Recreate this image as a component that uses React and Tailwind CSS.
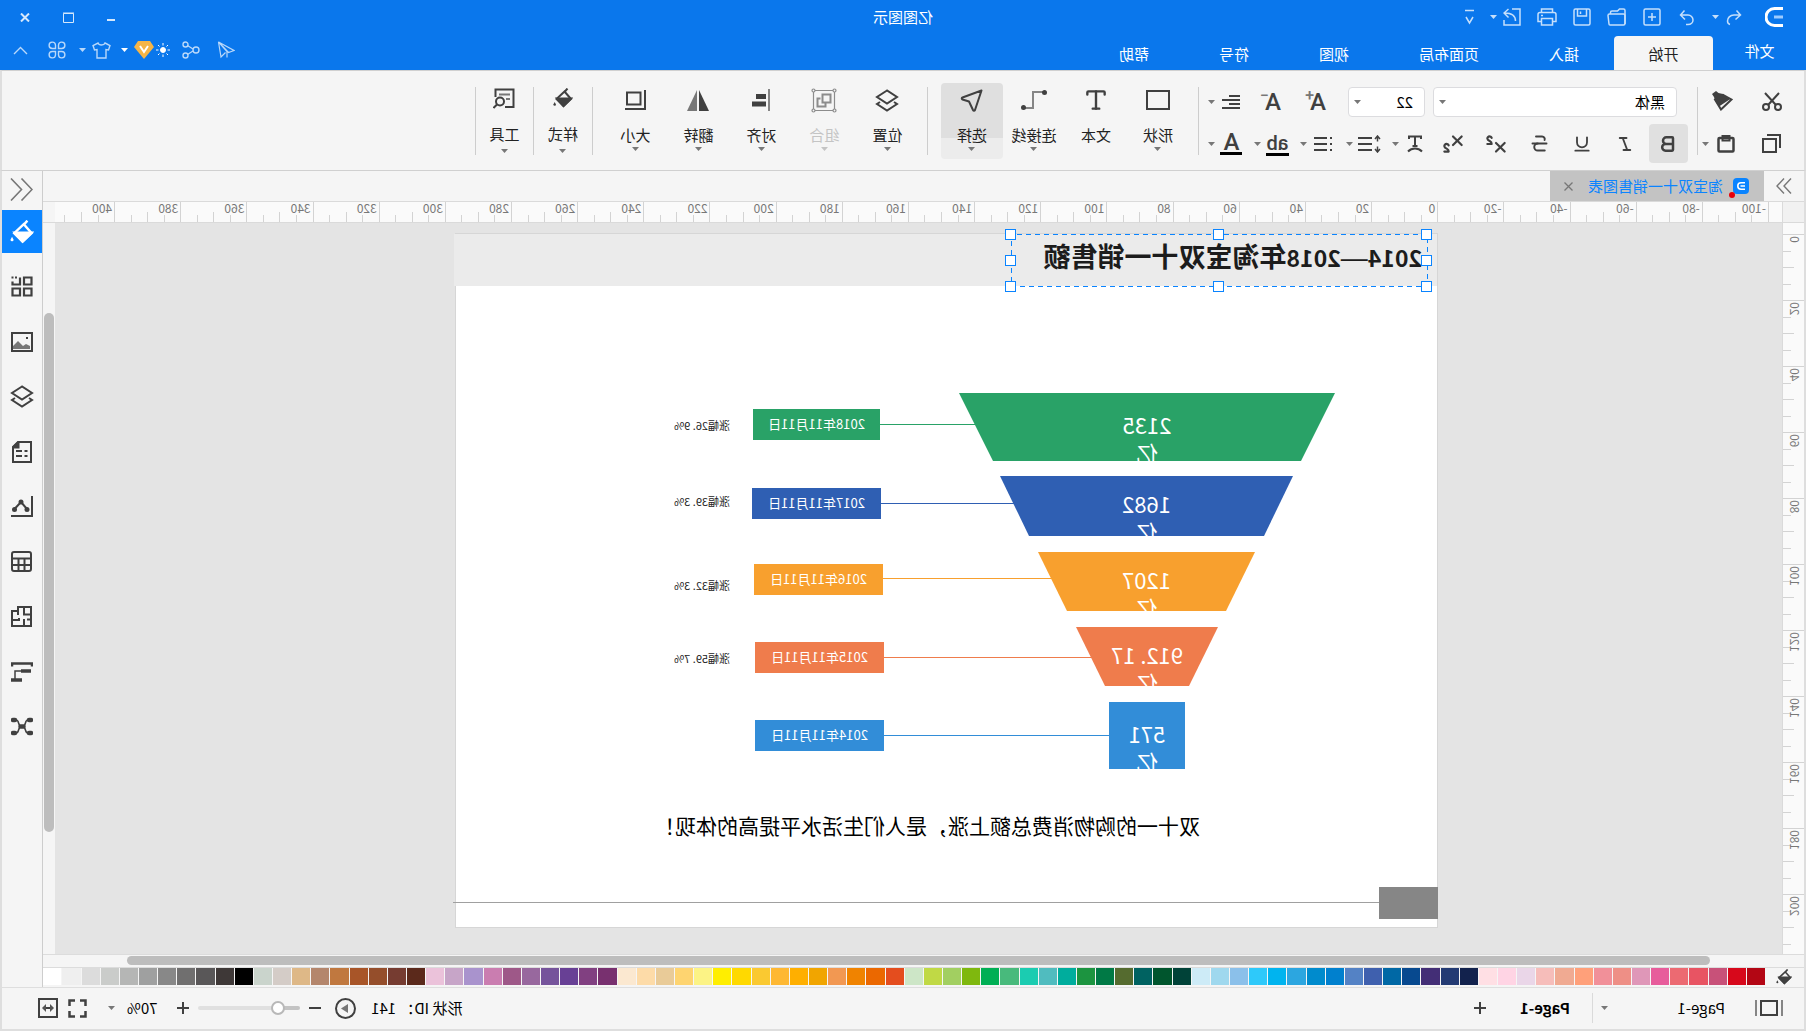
import React, { useState } from 'react';
import { Bold, Italic, Strikethrough, Subscript, Superscript, Type, Underline } from 'lucide-react';

const Svg = ({ w = 20, h = w, sw = 2, children }) => (
    <svg
        width={w}
        height={h}
        viewBox={`0 0 ${w} ${h}`}
        fill="none"
        stroke="currentColor"
        strokeWidth={sw}
        className="shrink-0"
        aria-hidden="true"
    >
        {children}
    </svg>
);

const Caret = () => (
    <svg width="7" height="4" viewBox="0 0 7 4" className="shrink-0" aria-hidden="true">
        <path d="M0 0h7L3.5 4z" fill="currentColor" />
    </svg>
);

/* ---------- quick access icons ---------- */

const LogoIcon = () => (
    <Svg w={19} h={20} sw={3}>
        <path d="M1 1.500h8.500a8.500 8.500 0 0 1 0 17H1" />
        <path d="M1 10h9" stroke="#9ccbff" />
    </Svg>
);
const UndoIcon = () => (
    <Svg w={16} h={17} sw={1.5}>
        <path d="M5.500 1.500 1.500 6l5 4.500M2 6h6c4 0 6.500 3 6.500 6 0 2-1 3-2.500 3.500" />
    </Svg>
);
const RedoIcon = () => (
    <Svg w={16} h={17} sw={1.5}>
        <path d="M10.500 1.500 14.500 6l-4.500 4.500M14 6H7a5 5 0 0 0-5 5c0 2.500 2 4.500 5 4.500h2" />
    </Svg>
);
const NewIcon = () => (
    <Svg w={18} sw={1.5}>
        <rect x="1" y="1" width="16" height="16" rx="1.500" />
        <path d="M9 5v8M5 9h8" />
    </Svg>
);
const OpenIcon = () => (
    <Svg w={19} h={18} sw={1.5}>
        <path d="M1 16V2.500C1 1.500 1.500 1 2.500 1h4l2 2h5.500c1 0 1.500.500 1.500 1.500V6" />
        <path d="M1 15.500V7.500C1 6.500 1.500 6 2.500 6h14c1 0 1.500.500 1.500 1.500L17 16c0 .700-.500 1-1 1H2.500C1.500 17 1 16.500 1 15.500z" />
    </Svg>
);
const SaveIcon = () => (
    <Svg w={18} sw={1.5}>
        <rect x="1" y="1" width="16" height="16" rx="1.500" />
        <path d="M4.500 1v7h9V1M10.500 3.500v2.500" />
    </Svg>
);
const PrintIcon = () => (
    <Svg w={20} h={18} sw={1.5}>
        <path d="M4.500 4.500V1h11v3.500M4.500 13.500H1V6.500c0-1 .500-2 2-2h14c1.500 0 2 1 2 2v7h-3.500" />
        <path d="M4.500 10.500h11V17h-11zM14 7.500h2" />
    </Svg>
);
const ExportIcon = () => (
    <Svg w={18} sw={1.5}>
        <path d="M9 1H1v16h16v-5M5.500 13c0-5 3.500-8 11-8M12.500 1l4.500 4-4.500 4.500" />
    </Svg>
);
const MoreIcon = () => (
    <Svg w={9} h={16} sw={1.5}>
        <path d="M0 1.500h9M1 8l3.500 6L8 8" />
    </Svg>
);

/* ---------- header right icons ---------- */

const SendIcon = () => (
    <Svg w={18} sw={1.2}>
        <path d="M16.500 1 1 9.500l5.500 2L16.500 1zM16.500 1 14 16l-4.500-4.500M8 16.500v-6L16 1.500" />
    </Svg>
);
const ShareIcon = () => (
    <Svg w={18} sw={1.4}>
        <circle cx="4" cy="9" r="3" />
        <circle cx="14.500" cy="3.500" r="2.500" />
        <circle cx="14.500" cy="14.500" r="2.500" />
        <path d="M7 8l5.500-3.500M7 10l5.500 3.500" />
    </Svg>
);
const SunIcon = () => (
    <Svg w={14} sw={1}>
        <circle cx="7" cy="7" r="2.500" fill="currentColor" />
        <path d="M7 0v2.500M7 11.500V14M0 7h2.500M11.500 7H14M2 2l1.500 1.500M10.500 10.500 12 12M12 2l-1.500 1.500M3.500 10.500 2 12" />
    </Svg>
);
const VipIcon = () => (
    <svg width="20" height="18" viewBox="0 0 20 18" aria-hidden="true">
        <path d="M4 0h12l4 6-10 12L0 6z" fill="#f5b547" />
        <path d="M6 5l4 6 4-6" fill="none" stroke="#fff" strokeWidth="2" />
    </svg>
);
const ShirtIcon = () => (
    <Svg w={19} h={17} sw={1.4}>
        <path d="M6 1 1 3.500 2.500 8l2.500-.500V16h9V7.500l2.500.500L18 3.500 13 1c-.500 1.500-2 2-3.500 2S6.500 2.500 6 1z" />
    </Svg>
);
const CloverIcon = () => (
    <Svg w={18} sw={1.4}>
        <path d="M7.500 7.500V4a3.200 3.200 0 1 0-3.200 3.500zM10.500 7.500V4a3.200 3.200 0 1 1 3.200 3.500zM7.500 10.500V14a3.200 3.200 0 1 1-3.200-3.500zM10.500 10.500V14a3.200 3.200 0 1 0 3.200-3.500z" />
    </Svg>
);

/* ---------- ribbon icons ---------- */

const CutIcon = () => (
    <Svg w={20} h={19}>
        <circle cx="4" cy="15" r="3" />
        <circle cx="16" cy="15" r="3" />
        <path d="M3 1l10.500 11.500M17 1 6.500 12.500" />
    </Svg>
);
const BrushIcon = () => (
    <Svg w={21} h={20}>
        <path d="M1.500 8.500 12 18.500l6-10L10 4z" />
        <path d="M3.500 8.500 10 3l4.500-1L17 0l4 3-2 3-1 3.500-4 6z" fill="currentColor" stroke="none" />
    </Svg>
);
const CopyIcon = () => (
    <Svg w={19}>
        <path d="M5 5h13v13H5zM1 14V1h13" />
    </Svg>
);
const PasteIcon = () => (
    <Svg w={18} h={19} sw={2.5}>
        <rect x="1.500" y="4" width="15" height="13.500" rx="1" />
        <path d="M5.500 2h7v4.500h-7z" strokeWidth="2" />
    </Svg>
);
const AlignTextIcon = () => (
    <Svg w={18} h={14}>
        <path d="M0 1h11M0 5h18M0 9h11M0 13h18" />
    </Svg>
);
const CurveTextIcon = () => (
    <Svg w={16} h={18}>
        <path d="M2 4V1.500h12V4M8 2v9M5.500 11h5M1 16.500c4-4 10-4 14 0" />
    </Svg>
);
const LineHeightIcon = () => (
    <Svg w={23} h={18}>
        <path d="M9 3h14M9 9h14M9 15h14" />
        <path d="M3.500 1.500v5M1 4l2.500-3L6 4M3.500 11.500v5M1 14l2.500 3L6 14" strokeWidth="1.500" />
    </Svg>
);
const ListIcon = () => (
    <Svg w={18} h={16}>
        <path d="M0 2h2M0 8h2M0 14h2M5 2h13M5 8h13M5 14h13" />
    </Svg>
);
const ShapeIcon = () => (
    <Svg w={24} h={20}>
        <path d="M1 1h22v18H1z" />
    </Svg>
);
const ConnectorIcon = () => (
    <Svg w={26} h={20}>
        <path d="M3 2h11v16h9" stroke="#858585" />
        <circle cx="2.500" cy="2.500" r="2.500" fill="currentColor" stroke="none" />
        <circle cx="23.500" cy="17.500" r="2.500" fill="currentColor" stroke="none" />
    </Svg>
);
const SelectIcon = () => (
    <Svg w={24}>
        <path d="M2.500 2.500 21.500 9.500c1 .500 1 1.500 0 2L15 13.500 11 22c-.500 1-1.500 1-2 0z" strokeLinejoin="round" />
    </Svg>
);
const LayersIcon = () => (
    <Svg w={24} h={23}>
        <path d="M12 1.500 22 8l-10 6.500L2 8z" />
        <path d="M5 13l-3 2 10 6.500L22 15l-3-2" />
    </Svg>
);
const GroupIcon = () => (
    <Svg w={26} h={25} sw={1.2}>
        <path d="M2.500 2.500h21v20h-21z" />
        <path d="M6.500 6.500h8v8h-8zM16.500 10.500h3v8h-8v-3" strokeWidth="2" />
        <g fill="#f5f5f5">
            <circle cx="2.500" cy="2.500" r="1.500" />
            <circle cx="23.500" cy="2.500" r="1.500" />
            <circle cx="2.500" cy="22.500" r="1.500" />
            <circle cx="23.500" cy="22.500" r="1.500" />
        </g>
    </Svg>
);
const AlignIcon = () => (
    <Svg w={18} h={22}>
        <path d="M1 0v22" stroke="#858585" />
        <path d="M4 7.500h10M4 15h14" strokeWidth="5" />
    </Svg>
);
const FlipIcon = () => (
    <svg width="22" height="21" viewBox="0 0 22 21" aria-hidden="true">
        <path d="M10 0v21H0z" fill="#404040" />
        <path d="M12 0v21h10z" fill="#777" />
    </svg>
);
const SizeIcon = () => (
    <Svg w={21} h={20}>
        <path d="M5.500 2.500H19v12H5.500zM1 0v19h20" />
    </Svg>
);
const BucketIcon = ({ size = 20 }) => (
    <svg
        width={size}
        height={size}
        viewBox="0 0 20 20"
        fill="none"
        stroke="currentColor"
        strokeWidth="2"
        aria-hidden="true"
    >
        <path d="M5.500 .500l3.500 4M8.500 3.500l8 7.500-7 7-7.500-7z" />
        <path d="M2 10.500h14L9.500 18z" fill="currentColor" />
        <path d="M18.300 14l1.300 2.500a1.300 1.300 0 1 1-2.600 0z" fill="currentColor" stroke="none" />
    </svg>
);
const ToolsIcon = () => (
    <Svg w={22} h={21}>
        <path d="M10 19H1.500V1.500h18V9" />
        <path d="M5 6.500h11M5 11h4" stroke="#777" />
        <circle cx="15" cy="13.500" r="4" />
        <path d="M18 16.500 21.500 20" />
    </Svg>
);

/* ---------- side bar icons ---------- */

const SideBucketIcon = () => <BucketIcon size={24} />;
const AppsIcon = () => (
    <Svg w={22} h={21} sw={2.2}>
        <path d="M1.500 1.500h7.500v7H1.500zM1.500 12.500h7.500v7H1.500zM13 12.500h7.500v7H13zM13 1.500v7h7.500v-3" />
        <path d="M16 1.500h2M19.500 1.500h2" />
    </Svg>
);
const PictureIcon = () => (
    <Svg w={22} h={20}>
        <path d="M1 1h20v18H1z" />
        <path d="M3 17v-3l4-2 3 2 5-5 5 5v3z" fill="#777" stroke="none" />
        <path d="M5 6h2" />
    </Svg>
);
const NoteIcon = () => (
    <Svg w={20} h={22}>
        <path d="M1 1h13l5 5v15H1zM4.500 10h3M10 10h6M4.500 15h3M10 15h6" />
        <path d="M13.500 1v5.500H19z" fill="currentColor" />
    </Svg>
);
const ChartIcon = () => (
    <Svg w={22} h={21}>
        <path d="M1 0v20h21" />
        <path d="M6 13l6-7 6.500 7" />
        <g fill="currentColor" stroke="none">
            <circle cx="6" cy="13.500" r="2.500" />
            <circle cx="12" cy="6" r="2.500" />
            <circle cx="18.500" cy="13.500" r="2.500" />
        </g>
    </Svg>
);
const TableIcon = () => (
    <Svg w={21}>
        <rect x="1" y="1" width="19" height="19" rx="2" />
        <path d="M1 7.500h19M1 14h19M7.500 8v12M13.500 8v12" />
    </Svg>
);
const PlanIcon = () => (
    <Svg w={21}>
        <path d="M1 1h13v4h6v15H1zM1 8.500h8M8 1v8M14 5v4M8 20v-7M1 13.500h4M13 14h7M13 12v3" />
    </Svg>
);
const GanttIcon = () => (
    <Svg w={22} h={20}>
        <path d="M0 1.500h22M1 1v3.500M21 1v3.500" strokeWidth="2.500" />
        <path d="M2 9h10M11 18h11" strokeWidth="3.500" />
        <path d="M12 9h6v8" strokeWidth="1.500" />
    </Svg>
);
const MindIcon = () => (
    <Svg w={22} h={19}>
        <path d="M2 3h2M2 16h2M18 3h2M18 16h2M9.500 9.500h3" strokeWidth="4.500" strokeLinecap="round" />
        <path d="M5 3c4 0 1 6.500 6 6.500S13 3 17 3M5 16c4 0 1-6.500 6-6.500s2 6.500 6 6.500" strokeWidth="1.500" />
    </Svg>
);

/* ---------- data ---------- */

const MENU = [
    { name: '开始', width: 'w-[99px]' },
    { name: '插入', width: 'w-[100px]' },
    { name: '页面布局', width: 'w-[130px]' },
    { name: '视图', width: 'w-[100px]' },
    { name: '符号', width: 'w-[100px]' },
    { name: '帮助', width: 'w-[100px]' },
];

const SIDE_TOOLS = [
    ['填充', SideBucketIcon],
    ['符号库', AppsIcon],
    ['图片', PictureIcon],
    ['图层', LayersIcon],
    ['注释', NoteIcon],
    ['图表', ChartIcon],
    ['表格', TableIcon],
    ['平面图', PlanIcon],
    ['甘特图', GanttIcon],
    ['思维导图', MindIcon],
];

const RULER_X = Array.from({ length: 26 }, (_, i) => i * 20 - 100);
const RULER_Y = Array.from({ length: 11 }, (_, i) => i * 20);

const PALETTE = [
    '#b30614', '#d7081b', '#c85179', '#e85463', '#ec6a72', '#e75c9b', '#df97b8', '#ee8f86', '#f19099', '#ffa07a',
    '#f0aa92', '#f6bdba', '#ead6e8', '#ffd4e4', '#ffdfe4', '#12224d', '#233a73', '#432e76', '#07498f', '#0068a5',
    '#3f60ae', '#5482c5', '#0080ce', '#008bcd', '#2ca6e0', '#00b4ef', '#2ec9fa', '#8bc0ea', '#9fd8ee', '#cdebf7',
    '#004238', '#00552d', '#006261', '#556b2f', '#007945', '#1c9440', '#00ad9d', '#50bcbf', '#1bccb1', '#48ba7c',
    '#00af54', '#7fb80e', '#a2cf61', '#c0d945', '#cde6c7', '#e44d1e', '#eb6800', '#f08300', '#f29852', '#f1a500',
    '#ffaf00', '#feb833', '#fac931', '#ffd900', '#ffee00', '#fcf385', '#fed470', '#e9cb98', '#fddba8', '#fbe8d0',
    '#78306f', '#814081', '#684095', '#75539b', '#98689e', '#9e5888', '#ca7db0', '#a993cd', '#c7a5c8', '#ebc2da',
    '#5b291b', '#763c31', '#954e2b', '#a85528', '#c0783f', '#b4866c', '#deb887', '#d4ccc7', '#cad4cc', '#000000',
    '#3e3837', '#595758', '#706f6f', '#888888', '#9fa0a0', '#b5b6b5', '#caccca', '#dcdcdc', '#efefef', '#ffffff',
];

const SLANT = '[clip-path:polygon(0_0,100%_0,calc(100%-29px)_100%,29px_100%)]';

const FUNNEL = [
    {
        value: '2135',
        date: '2018年11月11日',
        growth: '涨幅26. 9%',
        color: 'bg-[#29a267]',
        shape: 'left-[102px] top-[159px] w-[376px] h-[68px] [clip-path:polygon(0_0,100%_0,calc(100%-34px)_100%,34px_100%)]',
        line: 'top-[190px]',
        box: 'left-[557px] top-[175px] w-[127px]',
        note: 'top-[183px]',
    },
    {
        value: '1682',
        date: '2017年11月11日',
        growth: '涨幅39. 3%',
        color: 'bg-[#2f5fb3]',
        shape: `left-[144px] top-[242px] w-[293px] h-[60px] ${SLANT}`,
        line: 'top-[269px]',
        box: 'left-[556px] top-[254px] w-[129px]',
        note: 'top-[259px]',
    },
    {
        value: '1207',
        date: '2016年11月11日',
        growth: '涨幅32. 3%',
        color: 'bg-[#f8a02e]',
        shape: `left-[182px] top-[318px] w-[217px] h-[59px] ${SLANT}`,
        line: 'top-[344px]',
        box: 'left-[554px] top-[330px] w-[129px]',
        note: 'top-[343px]',
    },
    {
        value: '912. 17',
        date: '2015年11月11日',
        growth: '涨幅59. 7%',
        color: 'bg-[#ef7c4c]',
        shape: `left-[219px] top-[393px] w-[142px] h-[59px] ${SLANT}`,
        line: 'top-[423px]',
        box: 'left-[553px] top-[408px] w-[129px]',
        note: 'top-[416px]',
    },
    {
        value: '571',
        date: '2014年11月11日',
        color: 'bg-[#328dd8]',
        shape: 'left-[252px] top-[468px] w-[76px] h-[67px]',
        line: 'top-[501px]',
        box: 'left-[553px] top-[486px] w-[129px]',
    },
];

const HANDLES = [
    'left-0 top-0',
    'left-1/2 top-0',
    'left-full top-0',
    'left-0 top-1/2',
    'left-full top-1/2',
    'left-0 top-full',
    'left-1/2 top-full',
    'left-full top-full',
];

/* ---------- header ---------- */

const QuickButton = ({ label, children }) => (
    <button aria-label={label} className="flex h-[34px] w-[30px] items-center justify-center">
        {children}
    </button>
);

const Header = () => {
    const [active, setActive] = useState('开始');

    return (
        <header className="flex h-[70px] shrink-0 flex-col bg-[#0a77ec] text-[15px] leading-5 text-white">
            <div className="grid h-[34px] grid-cols-[1fr_auto_1fr] items-center">
                <div className="flex items-center gap-[5px] pl-4 text-[#c5dffb]">
                    <span className="mr-1.5 flex w-[30px] justify-center text-white">
                        <LogoIcon />
                    </span>
                    <span className="mr-[5px] flex items-center">
                        <QuickButton label="撤销"><UndoIcon /></QuickButton>
                        <Caret />
                    </span>
                    <QuickButton label="重做"><RedoIcon /></QuickButton>
                    <QuickButton label="新建"><NewIcon /></QuickButton>
                    <QuickButton label="打开"><OpenIcon /></QuickButton>
                    <QuickButton label="保存"><SaveIcon /></QuickButton>
                    <QuickButton label="打印"><PrintIcon /></QuickButton>
                    <span className="flex items-center">
                        <QuickButton label="导出"><ExportIcon /></QuickButton>
                        <Caret />
                    </span>
                    <QuickButton label="更多"><MoreIcon /></QuickButton>
                </div>
                <h1>亿图图示</h1>
                <div className="mr-1 flex justify-end text-[#d5e8fc]">
                    <button aria-label="最小化" className="flex h-8 w-[43px] items-center justify-center">
                        <Svg w={8} h={10} sw={2}><path d="M0 8h8" /></Svg>
                    </button>
                    <button aria-label="最大化" className="flex h-8 w-[43px] items-center justify-center">
                        <Svg w={11} sw={1}><path d="M.500 1.500h10v9H.500zM0 1h11" /></Svg>
                    </button>
                    <button aria-label="关闭" className="flex h-8 w-[43px] items-center justify-center">
                        <Svg w={10} h={9}><path d="M1 .500l8 8M9 .500l-8 8" /></Svg>
                    </button>
                </div>
            </div>
            <div className="flex h-9 items-end">
                <button className="h-[34px] w-[93px] pb-1">文件</button>
                <nav className="flex">
                    {MENU.map((item) => (
                        <button
                            key={item.name}
                            onClick={() => setActive(item.name)}
                            className={`h-[34px] rounded-t-sm pt-px ${item.width} ${active === item.name
                                ? 'bg-[#f5f5f5] text-[#222]'
                                : ''
                                }`}
                        >
                            {item.name}
                        </button>
                    ))}
                </nav>
                <div className="mr-[3px] ml-auto flex h-8 items-center self-start text-[#b9d8fa]">
                    <button aria-label="发送" className="flex w-[35px] justify-center"><SendIcon /></button>
                    <button aria-label="分享" className="flex w-[35px] justify-center"><ShareIcon /></button>
                    <button aria-label="会员" className="ml-1 flex items-center gap-[2px] text-white">
                        <SunIcon />
                        <VipIcon />
                        <span className="mr-1 ml-1"><Caret /></span>
                    </button>
                    <button aria-label="主题" className="flex w-[42px] items-center gap-1.5 pl-1.5">
                        <ShirtIcon />
                        <Caret />
                    </button>
                    <button aria-label="应用" className="flex w-[36px] justify-center"><CloverIcon /></button>
                    <button aria-label="收起" className="flex w-[36px] justify-center">
                        <Svg w={15} h={9} sw={1.4}><path d="M1 8l6.500-6.500L14 8" /></Svg>
                    </button>
                </div>
            </div>
        </header>
    );
};

/* ---------- ribbon ---------- */

const Divider = () => <span className="h-[68px] w-px shrink-0 bg-[#cdcdcd]" />;

const IconButton = ({ label, className = 'w-[43px]', children }) => (
    <button aria-label={label} className={`flex h-full items-center justify-center ${className}`}>
        {children}
    </button>
);

const DropButton = ({ label, children }) => (
    <button aria-label={label} className="flex h-full w-[46px] items-center">
        <span className="flex w-[33px] justify-center">{children}</span>
        <span className="text-[#777]"><Caret /></span>
    </button>
);

const BigButton = ({ label, icon: Icon, width, caret = true, tall, active, disabled }) => (
    <button
        disabled={disabled}
        className={`-mt-1 flex h-[76px] flex-col items-center rounded-sm ${width} ${tall ? 'pt-[3px]' : 'pt-[5px]'} ${active
            ? 'bg-[linear-gradient(#dfdfdf_55px,#ececec_55px)]'
            : ''
            } ${disabled ? 'text-[#c4c4c4]' : 'text-[#404040]'}`}
    >
        <span className={`flex h-6 items-center ${disabled ? 'text-[#8c8c8c]' : ''}`}><Icon /></span>
        <span className={`text-[15px] leading-5 ${tall ? 'mt-[14px]' : 'mt-[13px]'} ${disabled ? '' : 'text-[#222]'}`}>
            {label}
        </span>
        {caret && (
            <span className={`${tall ? 'mt-[5px]' : 'mt-[2px]'} ${disabled ? '' : 'text-[#777]'}`}><Caret /></span>
        )}
    </button>
);

const TypeIcon = () => <Type size={26} strokeWidth={2.2} />;

const Ribbon = () => (
    <section className="flex h-[101px] shrink-0 items-start border-x-2 border-y border-x-[#dedede] border-y-[#d0d0d0] bg-[#f5f5f5] pt-4 text-[#404040]">
        <div className="flex w-[106px] flex-col pl-[7px]">
            <div className="flex h-7">
                <IconButton label="剪切" className="w-[50px]"><CutIcon /></IconButton>
                <IconButton label="格式刷" className="w-[49px]"><BrushIcon /></IconButton>
            </div>
            <div className="mt-[9px] flex h-[39px]">
                <IconButton label="复制" className="w-[50px]"><CopyIcon /></IconButton>
                <button aria-label="粘贴" className="flex items-center gap-2 pl-3">
                    <PasteIcon />
                    <span className="text-[#777]"><Caret /></span>
                </button>
            </div>
        </div>
        <Divider />
        <div className="flex w-[498px] flex-col">
            <div className="flex h-[30px] pl-5">
                <label className="relative flex w-[244px] items-center text-[#777]">
                    <select
                        aria-label="字体"
                        className="h-full w-full appearance-none rounded-sm border border-[#dcdcdf] bg-white pl-[11px] text-[15px] leading-5 text-black"
                    >
                        <option>黑体</option>
                    </select>
                    <span className="pointer-events-none absolute right-1.5"><Caret /></span>
                </label>
                <label className="relative ml-2 flex w-[77px] items-center text-[#777]">
                    <select
                        aria-label="字号"
                        className="h-full w-full appearance-none rounded-sm border border-[#dcdcdf] bg-white pl-[11px] text-[15px] leading-5 text-black"
                    >
                        <option>22</option>
                    </select>
                    <span className="pointer-events-none absolute right-1.5"><Caret /></span>
                </label>
                <button className="ml-[10px] flex w-[45px] items-center justify-center font-['Roboto'] text-[24px] leading-[30px] font-medium">
                    A<span className="-mt-3 -ml-1 text-[16px] leading-4 text-[#777]">+</span>
                </button>
                <button className="flex w-[45px] items-center justify-center font-['Roboto'] text-[24px] leading-[30px] font-medium">
                    A<span className="-mt-3 -ml-1 text-[16px] leading-4 text-[#777]">−</span>
                </button>
                <DropButton label="对齐文字"><AlignTextIcon /></DropButton>
            </div>
            <div className="mt-[7px] flex h-[39px] pl-[9px]">
                <IconButton label="粗体" className="mr-[2px] w-[39px] rounded-sm bg-[#e0e0e0]">
                    <Bold size={20} strokeWidth={3} />
                </IconButton>
                <IconButton label="斜体"><Italic size={18} strokeWidth={2.5} /></IconButton>
                <IconButton label="下划线"><Underline size={20} strokeWidth={2.2} /></IconButton>
                <IconButton label="删除线"><Strikethrough size={21} strokeWidth={2.2} /></IconButton>
                <IconButton label="上标"><Superscript size={26} strokeWidth={2} /></IconButton>
                <IconButton label="下标"><Subscript size={26} strokeWidth={2} /></IconButton>
                <DropButton label="文字变形"><CurveTextIcon /></DropButton>
                <DropButton label="行距"><LineHeightIcon /></DropButton>
                <DropButton label="项目符号"><ListIcon /></DropButton>
                <DropButton label="突出显示">
                    <span className="mt-0.5 border-b-[3px] border-black font-['Roboto'] text-[20px] leading-5 font-medium">ab</span>
                </DropButton>
                <DropButton label="字体颜色">
                    <span className="w-[22px] border-b-[3px] border-black font-['Roboto'] text-[24px] leading-5 font-medium">A</span>
                </DropButton>
            </div>
        </div>
        <Divider />
        <div className="mr-[13px] ml-[9px] flex">
            <BigButton label="形状" icon={ShapeIcon} width="w-[62px]" />
            <BigButton label="文本" icon={TypeIcon} width="w-[62px]" caret={false} />
            <BigButton label="连接线" icon={ConnectorIcon} width="w-[62px]" />
            <BigButton label="选择" icon={SelectIcon} width="w-[62px]" active />
        </div>
        <Divider />
        <div className="mr-[11px] ml-2 flex">
            <BigButton label="位置" icon={LayersIcon} width="w-[63px]" />
            <BigButton label="组合" icon={GroupIcon} width="w-[63px]" disabled />
            <BigButton label="对齐" icon={AlignIcon} width="w-[63px]" />
            <BigButton label="翻转" icon={FlipIcon} width="w-[63px]" />
            <BigButton label="大小" icon={SizeIcon} width="w-[63px]" />
        </div>
        <Divider />
        <BigButton label="样式" icon={BucketIcon} width="w-[58px]" tall />
        <Divider />
        <BigButton label="工具" icon={ToolsIcon} width="w-[57px]" tall />
        <Divider />
    </section>
);

/* ---------- work area ---------- */

const DocTabs = () => (
    <div className="flex h-[30px] shrink-0 items-stretch text-[15px] leading-5">
        <button aria-label="展开符号库" className="flex w-10 items-center justify-center text-[#777]">
            <Svg w={16} sw={1.4}><path d="M1 .500 8 8l-7 7.500M8 .500 15 8l-7 7.500" /></Svg>
        </button>
        <div className="flex w-[214px] items-center bg-[#c3c3c3] pl-[15px] text-[#0a84ff]">
            <span className="relative flex size-4 items-center justify-center rounded-sm bg-[#0a84ff] text-white">
                <Svg w={8} h={8} sw={1.6}><path d="M0 .800h4a3.200 3.200 0 0 1 0 6.400H0M0 4h4.500" /></Svg>
                <span className="absolute -right-1 -bottom-1 size-1.5 rounded-full bg-red-600" />
            </span>
            <span className="ml-[10px]">淘宝双十一销售图表</span>
            <button aria-label="关闭文档" className="ml-[15px] text-[#777]">
                <Svg w={9} sw={1.3}><path d="M.500.500l8 8M8.500.500l-8 8" /></Svg>
            </button>
        </div>
    </div>
);

const TopRuler = () => (
    <div className="flex h-[22px] shrink-0 border-y border-[#dadada] text-xs leading-3 text-[#777]">
        <div className="w-[22px] shrink-0 border-r border-[#dadada] bg-[#f1f1f1]" />
        <div className="min-w-0 flex-1 overflow-x-clip bg-[#fafafa] pl-[13px]">
            <div className="flex h-full w-[1720px]">
                {RULER_X.map((n) => (
                    <div key={n} className="relative flex flex-1 items-end border-l border-[#d3d3d3]">
                        <span className="absolute top-0 left-0.5">{n}</span>
                        <i className="h-[7px] flex-1 border-r border-[#d3d3d3]" />
                        <i className="h-[10px] flex-1 border-r border-[#d3d3d3]" />
                        <i className="h-[7px] flex-1 border-r border-[#d3d3d3]" />
                        <i className="flex-1" />
                    </div>
                ))}
            </div>
        </div>
        <div className="w-3 shrink-0 bg-[#f5f5f5]" />
    </div>
);

const SideRuler = () => (
    <div className="w-[22px] shrink-0 overflow-y-clip border-r border-[#dadada] bg-[#fafafa] pt-[11px] text-xs leading-[14px] text-[#777]">
        {RULER_Y.map((n) => (
            <div key={n} className="relative flex h-[66px] flex-col items-end border-t border-[#d3d3d3]">
                <span className="absolute top-px left-0.5 rotate-180 [writing-mode:vertical-rl]">{n}</span>
                <i className="w-2 flex-1 border-b border-[#d3d3d3]" />
                <i className="w-[11px] flex-1 border-b border-[#d3d3d3]" />
                <i className="w-2 flex-1 border-b border-[#d3d3d3]" />
                <i className="flex-1" />
            </div>
        ))}
    </div>
);

const Page = () => (
    <div className="relative h-[695px] w-[983px] border border-[#d6d6d6] bg-white">
        <div className="-mr-0.5 h-[52px] bg-[#ebebeb]" />
        <div className="absolute top-0 left-[10px] flex h-[52px] w-[416px] items-center pb-1.5 pl-[5px] text-[27px] leading-8 font-bold whitespace-nowrap text-[#1c1c1c]">
            <h2>
                <span className="text-[23px]">2014</span>
                <span className="font-['Liberation_Sans'] font-normal">—</span>
                <span className="text-[23px]">2018</span>
                年淘宝双十一销售额
            </h2>
            <svg
                className="absolute inset-0 size-full overflow-visible"
                shapeRendering="crispEdges"
                aria-hidden="true"
            >
                <rect width="100%" height="100%" fill="none" stroke="#0a84ff" strokeDasharray="5 4" />
            </svg>
            {HANDLES.map((pos) => (
                <i
                    key={pos}
                    className={`absolute -mt-[5px] -ml-[5px] size-[11px] border border-[#0a84ff] bg-white ${pos}`}
                />
            ))}
        </div>

        {FUNNEL.map((row) => (
            <React.Fragment key={row.date}>
                <i className={`absolute left-[327px] h-px w-[230px] ${row.color} ${row.line}`} />
                <div
                    className={`absolute flex items-center justify-center overflow-hidden ${row.color} ${row.shape}`}
                >
                    <p className="h-[34px] text-center text-[22px] leading-7 text-white">
                        {row.value}
                        <br />
                        亿
                    </p>
                </div>
                <div
                    className={`absolute flex h-[31px] items-center justify-center pb-0.5 text-[13px] leading-5 text-white ${row.color} ${row.box}`}
                >
                    {row.date}
                </div>
                {row.growth && (
                    <p className={`absolute left-[707px] text-[11px] leading-4 whitespace-nowrap text-[#222] ${row.note}`}>
                        {row.growth}
                    </p>
                )}
            </React.Fragment>
        ))}

        <p className="absolute top-[577px] left-[237px] text-[21px] leading-7 whitespace-nowrap text-black">
            双十一的购物消费总额上涨，是人们生活水平提高的体现！
        </p>
        <div className="absolute top-[653px] -left-px h-8 w-[59px] bg-[#868686]" />
        <div className="absolute top-[668px] left-[58px] h-px w-[926px] bg-[#a0a0a0]" />
    </div>
);

const Palette = () => (
    <div className="flex h-5 shrink-0 items-start border-t border-[#dcdcdc] pr-px text-[#404040]">
        <button aria-label="填充颜色" className="flex w-[39px] justify-center pt-px">
            <BucketIcon size={16} />
        </button>
        <div className="flex flex-1 gap-px">
            {PALETTE.map((c) => (
                <button key={c} aria-label={c} className="h-[17px] flex-1" style={{ backgroundColor: c }} />
            ))}
        </div>
    </div>
);

const SideBar = () => (
    <aside className="flex w-[41px] shrink-0 flex-col border-l border-[#cdcdcd] text-[#404040]">
        <button aria-label="收起面板" className="flex h-[39px] shrink-0 items-center justify-center pb-0.5 text-[#777]">
            <Svg w={23} sw={1.6}><path d="M11.500.500 1 11.500l10.500 11M22 .500l-10.500 11 10.500 11" /></Svg>
        </button>
        <div className="flex flex-col gap-3">
            {SIDE_TOOLS.map(([name, Icon], i) => (
                <button
                    key={name}
                    aria-label={name}
                    className={`flex h-[43px] items-center justify-center ${i === 0 ? 'bg-[#0a84ff] text-white' : ''}`}
                >
                    <Icon />
                </button>
            ))}
        </div>
    </aside>
);

/* ---------- status bar ---------- */

const StatusBar = () => {
    const [zoom, setZoom] = useState(18);

    return (
        <footer className="flex h-11 shrink-0 items-center border-x-2 border-t border-b-2 border-[#dedede] pb-px text-[15px] leading-5 text-black">
            <button aria-label="页面视图" className="ml-[21px] text-[#404040]">
                <Svg w={28} h={16}>
                    <path d="M6 1h16v14H6z" />
                    <path d="M1 0v16M27 0v16" stroke="#858585" />
                </Svg>
            </button>
            <label className="relative ml-[30px] flex w-[126px] items-center text-[#777]">
                <select aria-label="页面" className="w-full appearance-none bg-transparent text-[15px] leading-5 text-black">
                    <option>Page-1</option>
                </select>
                <span className="pointer-events-none absolute right-0.5"><Caret /></span>
            </label>
            <span className="ml-1.5 h-[30px] w-px bg-[#dadada]" />
            <button className="ml-[22px] font-bold">Page-1</button>
            <button aria-label="添加页面" className="ml-[34px] text-[#404040]">
                <Svg w={12}><path d="M6 0v12M0 6h12" /></Svg>
            </button>

            <p className="ml-auto w-[106px] whitespace-nowrap">形状 ID： 141</p>
            <button aria-label="播放" className="text-[#404040]">
                <Svg w={21}>
                    <circle cx="10.500" cy="10.500" r="9.500" />
                    <path d="M8 6v9l7-4.500z" fill="#777" stroke="none" />
                </Svg>
            </button>
            <button aria-label="缩小" className="ml-[14px] text-[#404040]">
                <Svg w={12}><path d="M0 6h12" /></Svg>
            </button>
            <input
                type="range"
                aria-label="缩放"
                value={zoom}
                onChange={(e) => setZoom(Number(e.target.value))}
                className="ml-[9px] h-1 w-[102px] appearance-none rounded-full bg-[linear-gradient(to_right,#c3c3c3_18%,#e0e0e0_18%)] [&::-webkit-slider-thumb]:size-[14px] [&::-webkit-slider-thumb]:appearance-none [&::-webkit-slider-thumb]:rounded-full [&::-webkit-slider-thumb]:border-2 [&::-webkit-slider-thumb]:border-solid [&::-webkit-slider-thumb]:border-[#b8b8b8] [&::-webkit-slider-thumb]:bg-white"
            />
            <button aria-label="放大" className="ml-[9px] text-[#404040]">
                <Svg w={12}><path d="M6 0v12M0 6h12" /></Svg>
            </button>
            <button className="ml-5 flex items-center gap-3">
                70%
                <span className="text-[#777]"><Caret /></span>
            </button>
            <button aria-label="全屏" className="ml-[21px] text-[#404040]">
                <Svg w={19} sw={2.5}>
                    <path d="M1.500 7V1.500H7M12 1.500h5.500V7M17.500 12v5.500H12M7 17.500H1.500V12" />
                </Svg>
            </button>
            <button aria-label="适应宽度" className="mr-9 ml-[10px] text-[#404040]">
                <Svg w={20}>
                    <path d="M1 1h18v18H1zM5 10h10" />
                    <path d="M8 6v8l-4-4zM12 6v8l4-4z" fill="#555" stroke="none" />
                </Svg>
            </button>
        </footer>
    );
};

const App = () => (
    <div className="flex h-screen -scale-x-100 flex-col overflow-hidden bg-[#f5f5f5] font-['Noto_Sans_CJK_SC',sans-serif]">
        <Header />
        <Ribbon />
        <main className="flex min-h-0 flex-1 border-x-2 border-[#dedede]">
            <div className="flex min-w-0 flex-1 flex-col">
                <DocTabs />
                <TopRuler />
                <div className="flex min-h-0 flex-1">
                    <SideRuler />
                    <div className="min-w-0 flex-1 overflow-hidden bg-[#e4e4e4] pt-[10px] pl-[344px]">
                        <Page />
                    </div>
                    <div className="flex w-3 shrink-0 flex-col px-px pt-[90px] pb-[122px]">
                        <div className="flex-1 rounded-full bg-[#bdbdbd]" />
                    </div>
                </div>
                <div className="h-[13px] shrink-0 border-t border-[#dcdcdc] pt-px pr-[84px] pl-[94px]">
                    <div className="h-[9px] rounded-full bg-[#bdbdbd]" />
                </div>
                <Palette />
            </div>
            <SideBar />
        </main>
        <StatusBar />
    </div>
);

export default App;
